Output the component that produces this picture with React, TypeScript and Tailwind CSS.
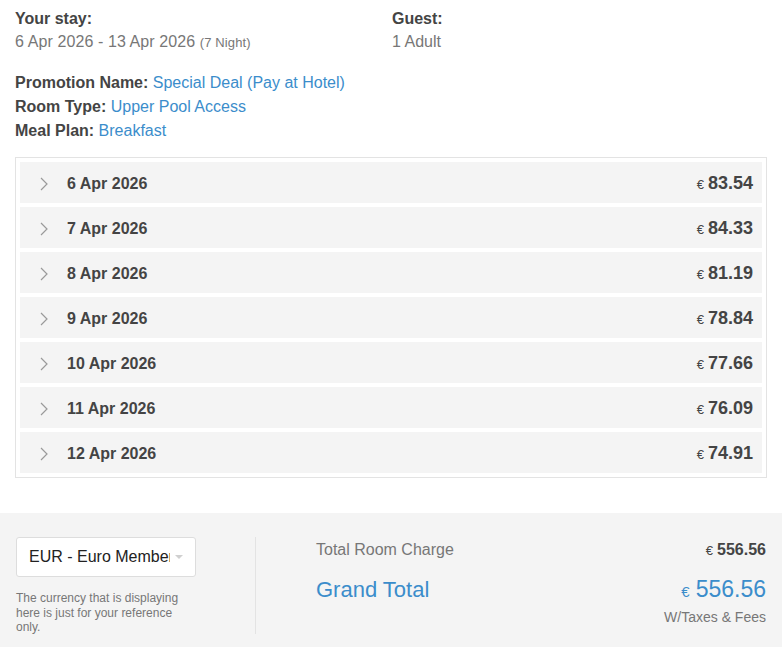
import React from 'react';

const nights = [
  { date: '6 Apr 2026', price: '83.54' },
  { date: '7 Apr 2026', price: '84.33' },
  { date: '8 Apr 2026', price: '81.19' },
  { date: '9 Apr 2026', price: '78.84' },
  { date: '10 Apr 2026', price: '77.66' },
  { date: '11 Apr 2026', price: '76.09' },
  { date: '12 Apr 2026', price: '74.91' },
];

const Chevron: React.FC = () => (
  <svg width="8" height="14" viewBox="0 0 8 14" className="shrink-0">
    <path d="M1 1 L7 7 L1 13" fill="none" stroke="#9a9a9a" strokeWidth="1.2" />
  </svg>
);

const App: React.FC = () => {
  return (
    <div className="w-[782px] min-h-[647px] bg-white font-['Liberation_Sans',Arial,sans-serif] text-[#444]">
      {/* Booking summary */}
      <div className="px-[15px] pt-[8px]">
        <div className="grid grid-cols-2">
          <div>
            <div className="text-[16px] font-bold leading-[22px] text-[#444]">Your stay:</div>
            <div className="text-[16px] leading-[24px] text-[#777] tracking-[0.1px]">
              6 Apr 2026 - 13 Apr 2026 <span className="text-[13px]">(7 Night)</span>
            </div>
          </div>
          <div className="pl-[1px]">
            <div className="text-[16px] font-bold leading-[22px] text-[#444]">Guest:</div>
            <div className="text-[16px] leading-[24px] text-[#777]">1 Adult</div>
          </div>
        </div>

        <div className="mt-[16px] text-[16px] leading-[24px]">
          <div>
            <span className="font-bold">Promotion Name: </span>
            <span className="text-[#3b8dcb]">Special Deal (Pay at Hotel)</span>
          </div>
          <div>
            <span className="font-bold">Room Type: </span>
            <span className="text-[#3b8dcb]">Upper Pool Access</span>
          </div>
          <div>
            <span className="font-bold">Meal Plan: </span>
            <span className="text-[#3b8dcb]">Breakfast</span>
          </div>
        </div>

        {/* Nightly breakdown */}
        <div className="mt-[14px] border border-[#e3e3e3] p-[4px] flex flex-col gap-[4px]">
          {nights.map((n) => (
            <div key={n.date} className="h-[41px] bg-[#f4f4f4] flex items-center pl-[20px] pr-[9px] pt-[2px]">
              <Chevron />
              <span className="ml-[19px] text-[16px] font-bold text-[#444]">{n.date}</span>
              <span className="ml-auto flex items-baseline">
                <span className="text-[13px] text-[#444] mr-[4px]">€</span>
                <span className="text-[18px] font-bold text-[#444]">{n.price}</span>
              </span>
            </div>
          ))}
        </div>
      </div>

      {/* Totals footer */}
      <div className="mt-[35px] bg-[#f4f4f4] h-[134px] flex pt-[24px] pl-[16px] pr-[16px]">
        <div className="w-[240px] shrink-0 border-r border-[#e3e3e3] h-[97px]">
          <div className="w-[180px] h-[40px] bg-white border border-[#ddd] rounded-[3px] flex items-center pl-[12px] pr-[12px] overflow-hidden">
            <span className="w-[141px] text-[16px] text-[#222] whitespace-nowrap overflow-hidden shrink-0">EUR - Euro Member</span>
            <svg width="8" height="5" viewBox="0 0 8 5" className="ml-auto shrink-0">
              <path d="M0 0 L8 0 L4 4 Z" fill="#d0d0d0" />
            </svg>
          </div>
          <p className="mt-[14px] w-[175px] text-[12px] leading-[14.5px] text-[#777]">
            The currency that is displaying here is just for your reference only.
          </p>
        </div>
        <div className="flex-1 pl-[60px]">
          <div className="flex items-baseline justify-between pt-[1px]">
            <span className="text-[16px] text-[#777]">Total Room Charge</span>
            <span className="flex items-baseline">
              <span className="text-[13px] text-[#444] mr-[4px]">€</span>
              <span className="text-[16px] font-bold text-[#444]">556.56</span>
            </span>
          </div>
          <div className="flex items-baseline justify-between mt-[10px]">
            <span className="text-[22px] text-[#3b8dcb]">Grand Total</span>
            <span className="flex items-baseline">
              <span className="text-[15px] text-[#3b8dcb] mr-[6px]">€</span>
              <span className="text-[23px] text-[#3b8dcb]">556.56</span>
            </span>
          </div>
          <div className="text-right text-[14px] text-[#777]">W/Taxes &amp; Fees</div>
        </div>
      </div>
    </div>
  );
};

export default App;
